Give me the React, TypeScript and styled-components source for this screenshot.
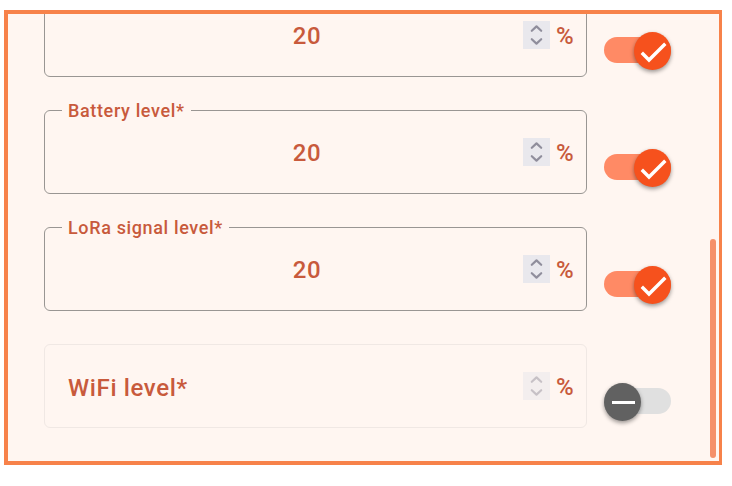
import React, { useId, useState } from "react";
import styled, { createGlobalStyle } from "styled-components";

const color = {
  frame: "#f7824a",
  surface: "#fff6f1",
  text: "#c85a3c",
  outline: "#999693",
  outlineDisabled: "#f0e8e4",
};

const GlobalStyle = createGlobalStyle`
  *, *::before, *::after { box-sizing: border-box; }
  body { margin: 0; background: #fff; font-family: Roboto, sans-serif; font-weight: 500; }
`;

const Page = styled.main`
  height: 100vh;
  padding: 10px 10px 21px 4px;
`;

const Panel = styled.section`
  position: relative;
  display: flex;
  flex-direction: column;
  justify-content: flex-end;
  height: 100%;
  overflow: hidden;
  border: solid ${color.frame};
  border-width: 4px 3px 4px 4px;
  background: ${color.surface};
`;

const ScrollThumb = styled.div`
  position: absolute;
  right: 3px;
  bottom: 3px;
  width: 6px;
  height: 49%;
  border-radius: 3px;
  background: #f5906a;
`;

const Form = styled.form`
  display: flex;
  flex-direction: column;
  flex-shrink: 0;
  gap: 33px;
  padding: 0 48px 33px 36px;
`;

const Row = styled.div`
  display: flex;
  align-items: flex-end;
  gap: 17px;
`;

const Field = styled.div<{ $disabled: boolean }>`
  position: relative;
  display: flex;
  flex: 1;
  align-items: center;
  min-width: 0;
  height: 84px;
  padding-right: 6px;
  border: 1px solid ${(p) => (p.$disabled ? color.outlineDisabled : color.outline)};
  border-radius: 6px;
  color: ${color.text};
  letter-spacing: 0.04em;
`;

const Label = styled.label<{ $floating: boolean }>`
  position: absolute;
  left: 17px;
  top: ${(p) => (p.$floating ? "-12px" : "27px")};
  padding: 0 6px;
  background: ${color.surface};
  font-size: ${(p) => (p.$floating ? "18px" : "24px")};
  line-height: ${(p) => (p.$floating ? "24px" : "32px")};
  white-space: nowrap;
`;

const NumberInput = styled.input`
  flex: 1;
  min-width: 0;
  height: 100%;
  padding: 2px 0 0 46px;
  border: 0;
  outline: 0;
  background: transparent;
  color: inherit;
  font: 500 24px Roboto, sans-serif;
  letter-spacing: inherit;
  text-align: center;
  appearance: textfield;

  &::-webkit-inner-spin-button {
    display: none;
  }
`;

const Stepper = styled.div<{ $disabled: boolean }>`
  display: flex;
  flex-direction: column;
  width: 27px;
  background: #e9e8ed;
  opacity: ${(p) => (p.$disabled ? 0.5 : 1)};
`;

const StepButton = styled.button`
  display: flex;
  justify-content: center;
  align-items: center;
  height: 14px;
  padding: 0;
  border: 0;
  background: transparent;
  color: #908e9c;
`;

const Unit = styled.span`
  width: 24px;
  margin-left: 6px;
  padding-top: 2px;
  font-size: 24px;
  line-height: 32px;
  letter-spacing: 0;
`;

const Switch = styled.label`
  position: relative;
  flex: none;
  width: 67px;
  height: 38px;
  margin-bottom: 7px;
  padding: 5px 0 7px;
`;

const SwitchInput = styled.input`
  display: block;
  width: 100%;
  height: 100%;
  margin: 0;
  border-radius: 13px;
  appearance: none;
  background: #e0e0e0;

  &:checked {
    background: #ff8a65;
  }
`;

const Thumb = styled.span<{ $on: boolean }>`
  position: absolute;
  top: 0;
  left: ${(p) => (p.$on ? "30px" : "0")};
  display: flex;
  width: 37px;
  height: 38px;
  border-radius: 50%;
  background: ${(p) => (p.$on ? "#f6511d" : "#616161")};
  box-shadow: 0 2px 4px rgba(0, 0, 0, 0.4);
  pointer-events: none;
`;

function Chevron({ up = false }: { up?: boolean }) {
  return (
    <svg width="27" height="14" viewBox="0 0 27 14" fill="none" stroke="currentColor" strokeWidth="2.2" strokeLinecap="round" strokeLinejoin="round" aria-hidden="true">
      <path d={up ? "M8.8 9.8 13.5 5.4 18.2 9.8" : "M8.8 17.8 13.5 22.2 18.2 17.8"} transform={up ? undefined : "translate(0 -13.6)"} />
    </svg>
  );
}

function ThumbIcon({ on }: { on: boolean }) {
  return (
    <svg width="37" height="38" viewBox="0 0 37 38" fill="none" stroke="#fff" strokeWidth={on ? 3.4 : 3} aria-hidden="true">
      <path d={on ? "M7.8 20.8 15 28 31.3 11.7" : "M8 19.5H31"} />
    </svg>
  );
}

interface LevelProps {
  label?: string;
  name: string;
  initial: string;
  initiallyOn: boolean;
}

function LevelRow({ label, name, initial, initiallyOn }: LevelProps) {
  const id = useId();
  const [value, setValue] = useState(initial);
  const [on, setOn] = useState(initiallyOn);
  const step = (delta: number) =>
    setValue((v) => String(Math.min(100, Math.max(0, Number(v) + delta))));

  return (
    <Row>
      <Field $disabled={!on}>
        <NumberInput
          id={id}
          type="number"
          min={0}
          max={100}
          value={value}
          disabled={!on}
          aria-label={label ? undefined : name}
          onChange={(e) => setValue(e.target.value)}
        />
        {label && (
          <Label htmlFor={id} $floating={value !== ""}>
            {label}
          </Label>
        )}
        <Stepper $disabled={!on}>
          <StepButton type="button" aria-label={`Increase ${name}`} disabled={!on} onClick={() => step(1)}>
            <Chevron up />
          </StepButton>
          <StepButton type="button" aria-label={`Decrease ${name}`} disabled={!on} onClick={() => step(-1)}>
            <Chevron />
          </StepButton>
        </Stepper>
        <Unit>%</Unit>
      </Field>
      <Switch>
        <SwitchInput
          type="checkbox"
          role="switch"
          aria-label={`Enable ${name}`}
          checked={on}
          onChange={(e) => setOn(e.target.checked)}
        />
        <Thumb $on={on}>
          <ThumbIcon on={on} />
        </Thumb>
      </Switch>
    </Row>
  );
}

export default function App() {
  return (
    <>
      <GlobalStyle />
      <Page>
        <Panel>
          <Form>
            <LevelRow name="level" initial="20" initiallyOn />
            <LevelRow label="Battery level*" name="battery level" initial="20" initiallyOn />
            <LevelRow label="LoRa signal level*" name="LoRa signal level" initial="20" initiallyOn />
            <LevelRow label="WiFi level*" name="WiFi level" initial="" initiallyOn={false} />
          </Form>
          <ScrollThumb />
        </Panel>
      </Page>
    </>
  );
}
